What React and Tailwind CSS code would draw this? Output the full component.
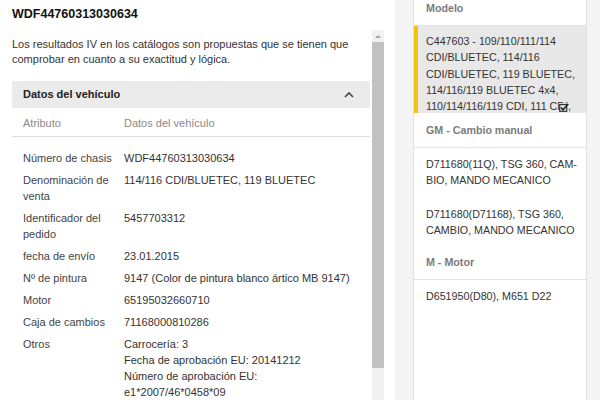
import React from "react";

const rows = [
  { label: "Número de chasis", value: ["WDF44760313030634"] },
  { label: "Denominación de venta", value: ["114/116 CDI/BLUETEC, 119 BLUETEC"] },
  { label: "Identificador del pedido", value: ["5457703312"] },
  { label: "fecha de envío", value: ["23.01.2015"] },
  { label: "Nº de pintura", value: ["9147 (Color de pintura blanco ártico MB 9147)"] },
  { label: "Motor", value: ["65195032660710"] },
  { label: "Caja de cambios", value: ["71168000810286"] },
  {
    label: "Otros",
    value: [
      "Carrocería: 3",
      "Fecha de aprobación EU: 20141212",
      "Número de aprobación EU:",
      "e1*2007/46*0458*09",
    ],
  },
];

const ChevronUp = () => (
  <svg width="10" height="7" viewBox="0 0 10 7" fill="none">
    <path d="M1 6 L5 2 L9 6" stroke="#444" strokeWidth="1.6" />
  </svg>
);

const CheckBox = () => (
  <svg width="10" height="9" viewBox="0 0 10 9" fill="none">
    <rect x="0.7" y="1.5" width="7" height="6.8" stroke="#333" strokeWidth="1.2" />
    <path d="M2 4.5 L4 6.7 L9.3 0.8" stroke="#222" strokeWidth="1.6" />
  </svg>
);

const Lines = ({ lines }) => (
  <>
    {lines.map((l) => (
      <span key={l} className="block whitespace-nowrap">
        {l}
      </span>
    ))}
  </>
);

const Header = ({ children, className = "" }) => (
  <div
    className={`border-b border-[#e2e2e2] px-3 font-bold text-[#7b7b7b] leading-4 ${className}`}
  >
    {children}
  </div>
);

const Item = ({ lines }) => (
  <div className="px-3 pt-[8px] pb-[10px] leading-4 text-[#333]">
    <Lines lines={lines} />
  </div>
);

export default function App() {
  return (
    <div
      className="flex h-[400px] w-[600px] overflow-hidden bg-white text-[11px] text-[#333]"
      style={{ fontFamily: '"Liberation Sans", Arial, sans-serif' }}
    >
      {/* left column */}
      <div className="flex w-[384px] flex-col">
        <div className="h-[30px] pl-3 pt-[6px] text-[12.5px] font-bold leading-4 text-[#111]">
          WDF44760313030634
        </div>
        <div className="flex flex-1 overflow-hidden">
          <div className="w-[372px] overflow-hidden pl-3 pr-[2px]">
            <p className="pt-[7px] leading-[15px] text-[#333]">
              Los resultados IV en los catálogos son propuestas que se tienen que
              <br />
              comprobar en cuanto a su exactitud y lógica.
            </p>

            <div className="mt-[14px] flex h-[27px] items-center justify-between bg-[#ebebeb] pl-[11px] pr-[16px]">
              <span className="font-bold text-[#222]">Datos del vehículo</span>
              <ChevronUp />
            </div>

            <div className="flex border-b border-[#dedede] pl-[11px] pt-[7px] pb-[5px] leading-4 text-[#8a8a8a]">
              <div className="w-[101px]">Atributo</div>
              <div>Datos del vehículo</div>
            </div>

            <div className="pt-[10px]">
              {rows.map((r) => (
                <div key={r.label} className="flex py-[3px] pl-[11px] leading-4">
                  <div className="w-[101px] shrink-0 pr-[6px] text-[#444]">{r.label}</div>
                  <div className="text-[#333]">
                    <Lines lines={r.value} />
                  </div>
                </div>
              ))}
            </div>
          </div>

          {/* scrollbar */}
          <div className="flex w-[12px] flex-col bg-[#f1f1f1]">
            <div className="flex h-[12px] items-center justify-center">
              <div className="h-0 w-0 border-x-[3px] border-b-[3px] border-x-transparent border-b-[#a3a3a3]" />
            </div>
            <div className="h-[326px] bg-[#c1c1c1]" />
          </div>
        </div>
      </div>

      <div className="w-[11px] bg-white" />

      {/* right column */}
      <div className="flex flex-1 bg-[#f4f4f4] pl-[18px] pr-[13px]">
        <div className="w-[174px] overflow-hidden border-x border-[#e2e2e2] bg-white text-[10.7px]">
          <Header className="h-[26px] pt-0">Modelo</Header>

          <div className="relative h-[87px] overflow-hidden border-l-[4px] border-[#f2c40f] bg-[#e8e8e8] pl-2 pr-2 pt-[7px] leading-[16.3px] text-[#333]">
            <Lines
              lines={[
                "C447603 - 109/110/111/114",
                "CDI/BLUETEC, 114/116",
                "CDI/BLUETEC, 119 BLUETEC,",
                "114/116/119 BLUETEC 4x4,",
                "110/114/116/119 CDI, 111 CDI,",
              ]}
            />
            <div className="absolute left-[141px] top-[77px] bg-[#e8e8e8]">
              <CheckBox />
            </div>
          </div>

          <Header className="pt-[9px] pb-[9px]">GM - Cambio manual</Header>
          <Item lines={["D711680(11Q), TSG 360, CAM-", "BIO, MANDO MECANICO"]} />
          <Item lines={["D711680(D71168), TSG 360,", "CAMBIO, MANDO MECANICO"]} />
          <Header className="pt-[6px] pb-[9px]">M - Motor</Header>
          <Item lines={["D651950(D80), M651 D22"]} />
        </div>
      </div>
    </div>
  );
}
